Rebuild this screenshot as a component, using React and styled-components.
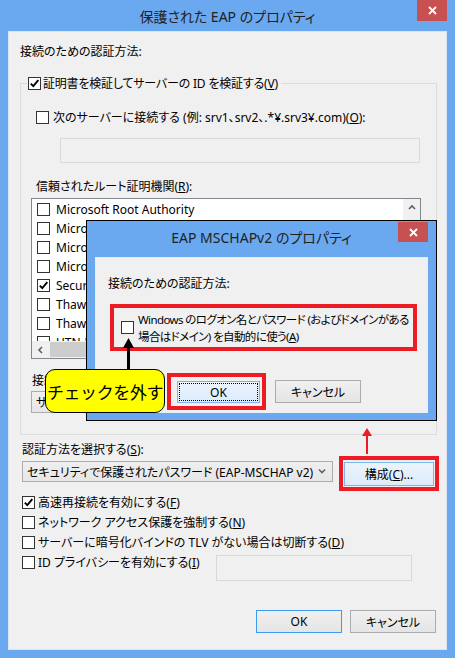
import React from 'react';
import styled, { createGlobalStyle } from 'styled-components';

const FONT = `"Noto Sans", "Noto Sans CJK JP", sans-serif`;
const RED = '#ed1c24';
const FRAME = '#6aa8f0';

const GlobalStyle = createGlobalStyle`
  html, body { margin: 0; padding: 0; background: #fff; }
  body {
    font-family: ${FONT};
    font-size: 12px;
    color: #000;
    font-feature-settings: "palt";
  }
  * { box-sizing: border-box; }
`;

const Window = styled.div`
  position: relative;
  width: 455px;
  height: 658px;
  background: ${FRAME};
  display: flex;
  flex-direction: column;
`;

const TitleBar = styled.div`
  height: ${p => p.$h}px;
  flex-shrink: 0;
  display: grid;
  grid-template-columns: 1fr auto 1fr;
  align-items: start;
`;

const TitleText = styled.div`
  grid-column: 2;
  font-size: 14px;
  line-height: 20px;
  color: #222;
  padding-top: ${p => p.$top}px;
  white-space: nowrap;
`;

const CloseBtn = styled.div`
  grid-column: 3;
  justify-self: end;
  width: 30px;
  height: ${p => p.$h}px;
  margin-top: ${p => p.$top}px;
  margin-right: ${p => p.$right}px;
  background: #c75050;
  display: flex;
  align-items: center;
  justify-content: center;
`;

const Client = styled.div`
  flex: 1;
  margin: 0 8px 8px 8px;
  background: #f0f0f0;
  border: 1px solid #dbe5f1;
  padding: 12px 9px 16px 11px;
  display: flex;
  flex-direction: column;
`;

const Label = styled.div`
  line-height: 16px;
  height: 16px;
  white-space: nowrap;
  margin: ${p => p.$m || '0'};
`;

const Group = styled.div`
  margin-top: 23px;
  border: 1px solid #dcdcdc;
  padding: 0 15px 21px 15px;
  display: flex;
  flex-direction: column;
`;

const Legend = styled.div`
  display: flex;
  align-items: center;
  gap: 2px;
  width: fit-content;
  height: 16px;
  margin: -9px 0 0 -9px;
  padding: 0 3px 0 1px;
  background: #f0f0f0;
  white-space: nowrap;
  letter-spacing: -0.2px;
`;

const CheckRow = styled.div`
  display: flex;
  align-items: center;
  gap: ${p => p.$gap || 3}px;
  height: 16px;
  white-space: nowrap;
  margin: ${p => p.$m || '0'};
`;

const Box = styled.span`
  flex-shrink: 0;
  width: 13px;
  height: 13px;
  border: 1px solid #333;
  background: #fff;
  display: flex;
  align-items: center;
  justify-content: center;
`;

const Field = styled.div`
  width: ${p => p.$w}px;
  height: ${p => p.$h}px;
  margin: ${p => p.$m || '0'};
  border: 1px solid #d9d9d9;
  background: #f0f0f0;
`;

const ListBox = styled.div`
  margin: 3px 0 0 -5px;
  width: 390px;
  height: 161px;
  border: 1px solid #828790;
  background: #fff;
  display: grid;
  grid-template-columns: 1fr 17px;
  grid-template-rows: 1fr 17px;
`;

const Items = styled.div`
  overflow: hidden;
  padding-top: 1px;
`;

const ListItem = styled.div`
  height: 19px;
  display: flex;
  align-items: center;
  gap: 6px;
  padding-left: 5px;
  white-space: nowrap;
`;

const VScroll = styled.div`
  background: #f0f0f0;
  display: flex;
  flex-direction: column;
`;

const ArrowBtn = styled.div`
  width: 17px;
  height: 17px;
  flex-shrink: 0;
  display: flex;
  align-items: center;
  justify-content: center;
`;

const HScroll = styled.div`
  background: #f0f0f0;
  display: flex;
  align-items: center;
`;

const Thumb = styled.div`
  height: 15px;
  width: 300px;
  margin-left: 1px;
  background: #cdcdcd;
`;

const Corner = styled.div`
  background: #f0f0f0;
`;

const Combo = styled.div`
  width: ${p => p.$w}px;
  height: ${p => p.$h}px;
  margin: ${p => p.$m || '0'};
  border: 1px solid #acacac;
  background: linear-gradient(#efefef, #e6e6e6);
  display: flex;
  align-items: center;
  padding: 0 6px 0 4px;
  white-space: nowrap;
  overflow: hidden;
  flex-shrink: 0;

  span { flex: 1; }
`;

const MethodRow = styled.div`
  display: flex;
  align-items: flex-start;
  margin: -2px 0 0 2px;
`;

const Highlight = styled.div`
  border: 4px solid ${RED};
  width: ${p => p.$w}px;
  height: ${p => p.$h}px;
  margin: ${p => p.$m || '0'};
  padding: ${p => p.$p || '0'};
  flex-shrink: 0;
  display: flex;
  align-items: ${p => p.$align || 'stretch'};
`;

const Button = styled.div`
  width: ${p => (p.$w ? `${p.$w}px` : '100%')};
  height: ${p => (p.$h ? `${p.$h}px` : '100%')};
  margin: ${p => p.$m || '0'};
  flex-shrink: 0;
  display: flex;
  align-items: center;
  justify-content: center;
  white-space: nowrap;
  border: 1px solid ${p => (p.$hot ? '#7eb4ea' : p.$def ? '#3c9af0' : '#acacac')};
  background: ${p =>
    p.$hot ? 'linear-gradient(#ecf4fc, #dcecfc)' : 'linear-gradient(#f0f0f0, #e5e5e5)'};
  outline: ${p => (p.$focus ? '1px dotted #000' : 'none')};
  outline-offset: -3px;
`;

const CheckList = styled.div`
  display: flex;
  flex-direction: column;
  gap: 4px;
  margin: 3px 0 0 2px;
`;

const PrivacyRow = styled.div`
  display: grid;
  grid-template-columns: 194px 196px;
  align-items: start;
`;

const Footer = styled.div`
  margin-top: auto;
  margin-right: 1px;
  display: flex;
  justify-content: flex-end;
  gap: 8px;
`;

/* overlay dialog */
const Dialog = styled.div`
  position: absolute;
  left: 86px;
  top: 220px;
  width: 351px;
  height: 201px;
  border: 1px solid #000;
  background: ${FRAME};
  display: flex;
  flex-direction: column;
`;

const DialogClient = styled.div`
  flex: 1;
  margin: 0 8px 7px 8px;
  background: #f0f0f0;
  border: 1px solid #e8eef6;
  padding: 18px 0 0 12px;
  display: flex;
  flex-direction: column;
`;

const TwoLines = styled.div`
  font-size: 11.5px;
  letter-spacing: -0.6px;
  line-height: 17px;
  white-space: nowrap;
  margin-left: 4px;
`;

const DialogButtons = styled.div`
  display: flex;
  align-items: center;
  margin: 22px 0 0 59px;
`;

const Callout = styled.div`
  position: absolute;
  left: 45px;
  top: 369px;
  width: 120px;
  height: 44px;
  background: #ffff00;
  border: 1px solid #000;
  border-radius: 10px;
  display: flex;
  align-items: center;
  justify-content: center;
  font-family: "Noto Sans CJK JP", sans-serif;
  font-feature-settings: normal;
  font-size: 17px;
  letter-spacing: -0.4px;
  white-space: nowrap;
`;

const Arrow = styled.svg`
  position: absolute;
  left: ${p => p.$x}px;
  top: ${p => p.$y}px;
`;

const Check = ({ on }) => (
  <Box>
    {on && (
      <svg width="11" height="11" viewBox="0 0 11 11">
        <path d="M1.8 5.6 L4.3 8.2 L9.3 2.2" fill="none" stroke="#000" strokeWidth="1.9" />
      </svg>
    )}
  </Box>
);

const Cross = () => (
  <svg width="9" height="9" viewBox="0 0 9 9">
    <path d="M1 1 L8 8 M8 1 L1 8" stroke="#fff" strokeWidth="1.8" />
  </svg>
);

const Chevron = ({ dir }) => {
  const d = {
    down: 'M1 1.5 L4 4.5 L7 1.5',
    up: 'M1 5 L4 2 L7 5',
    left: 'M5 1 L2 4 L5 7',
  }[dir];
  return (
    <svg width="8" height="8" viewBox="0 0 8 8">
      <path d={d} fill="none" stroke="#606060" strokeWidth="1.6" />
    </svg>
  );
};

const authorities = [
  ['Microsoft Root Authority', false],
  ['Microsoft Root Certificate Authority', false],
  ['Microsoft Root Certificate Authority 2010', false],
  ['Microsoft Root Certificate Authority 2011', false],
  ['Secure Server Certification Authority', true],
  ['Thawte Premium Server CA', false],
  ['Thawte Timestamping CA', false],
  ['UTN-USERFirst-Object', false],
];

const options = [
  ['高速再接続を有効にする(', 'F', ')', true],
  ['ネットワーク アクセス保護を強制する(', 'N', ')', false],
  ['サーバーに暗号化バインドの TLV がない場合は切断する(', 'D', ')', false],
];

export default function App() {
  return (
    <>
      <GlobalStyle />
      <Window>
        <TitleBar $h={31}>
          <TitleText $top={7}>保護された EAP のプロパティ</TitleText>
          <CloseBtn $h={21} $top={0} $right={8}><Cross /></CloseBtn>
        </TitleBar>

        <Client>
          <Label>接続のための認証方法:</Label>

          <Group>
            <Legend>
              <Check on />
              <span>証明書を検証してサーバーの ID を検証する(<u>V</u>)</span>
            </Legend>

            <CheckRow $m="18px 0 0 0" $gap={4}>
              <Check />
              <span>次のサーバーに接続する (例: srv1、srv2、.*¥.srv3¥.com)(<u>O</u>):</span>
            </CheckRow>
            <Field $w={360} $h={25} $m="13px 0 0 24px" />

            <Label $m="16px 0 0 0">信頼されたルート証明機関(<u>R</u>):</Label>
            <ListBox>
              <Items>
                {authorities.map(([name, on]) => (
                  <ListItem key={name}>
                    <Check on={on} />
                    <span>{name}</span>
                  </ListItem>
                ))}
              </Items>
              <VScroll>
                <ArrowBtn><Chevron dir="up" /></ArrowBtn>
              </VScroll>
              <HScroll>
                <ArrowBtn><Chevron dir="left" /></ArrowBtn>
                <Thumb />
              </HScroll>
              <Corner />
            </ListBox>

            <Label $m="14px 0 0 -4px">接続前の通知(<u>T</u>):</Label>
            <Combo $w={390} $h={22} $m="2px 0 0 -5px">
              <span>サーバーの ID を検証できない場合にユーザーに通知する</span>
              <Chevron dir="down" />
            </Combo>
          </Group>

          <Label $m="7px 0 0 2px">認証方法を選択する(<u>S</u>):</Label>
          <MethodRow>
            <Combo $w={311} $h={21} $m="5px 0 0 0">
              <span>セキュリティで保護されたパスワード (EAP-MSCHAP v2)</span>
              <Chevron dir="down" />
            </Combo>
            <Highlight $w={100} $h={35} $m="0 0 0 6px" $p="2px 1px 1px 1px">
              <Button $hot>構成(<u>C</u>)...</Button>
            </Highlight>
          </MethodRow>

          <CheckList>
            {options.map(([a, k, b, on]) => (
              <CheckRow key={k}>
                <Check on={on} />
                <span>{a}<u>{k}</u>{b}</span>
              </CheckRow>
            ))}
            <PrivacyRow>
              <CheckRow>
                <Check />
                <span>ID プライバシーを有効にする(<u>I</u>)</span>
              </CheckRow>
              <Field $w={196} $h={26} $m="1px 0 0 0" />
            </PrivacyRow>
          </CheckList>

          <Footer>
            <Button $w={86} $h={23} $def>OK</Button>
            <Button $w={86} $h={23}>キャンセル</Button>
          </Footer>
        </Client>

        <Dialog>
          <TitleBar $h={36}>
            <TitleText $top={7}>EAP MSCHAPv2 のプロパティ</TitleText>
            <CloseBtn $h={20} $top={1} $right={8}><Cross /></CloseBtn>
          </TitleBar>
          <DialogClient>
            <Label>接続のための認証方法:</Label>
            <Highlight $w={307} $h={47} $m="12px 0 0 2px" $p="0 0 0 7px" $align="center">
              <Check />
              <TwoLines>
                Windows のログオン名とパスワード (およびドメインがある<br />
                場合はドメイン) を自動的に使う(<u>A</u>)
              </TwoLines>
            </Highlight>
            <DialogButtons>
              <Highlight $w={99} $h={37} $p="4px 2px 3px 6px">
                <Button $hot $focus>OK</Button>
              </Highlight>
              <Button $w={86} $h={23} $m="0 0 0 9px">キャンセル</Button>
            </DialogButtons>
          </DialogClient>
        </Dialog>

        <Arrow $x={123} $y={338} width="11" height="32" viewBox="0 0 11 32">
          <path d="M5.5 0 L0 10 L11 10 Z" fill="#000" />
          <rect x="4" y="8" width="3" height="24" fill="#000" />
        </Arrow>
        <Callout>チェックを外す</Callout>

        <Arrow $x={362} $y={428} width="10" height="26" viewBox="0 0 10 26">
          <path d="M5 0 L0 8 L10 8 Z" fill={RED} />
          <rect x="4" y="6" width="2" height="20" fill={RED} />
        </Arrow>
      </Window>
    </>
  );
}
